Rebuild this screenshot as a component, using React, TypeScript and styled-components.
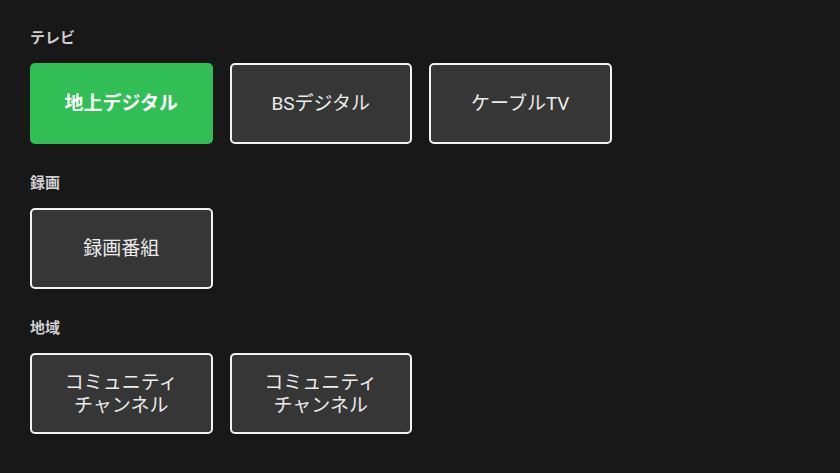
import React from "react";
import styled, { createGlobalStyle } from "styled-components";

const Global = createGlobalStyle`
  html, body {
    margin: 0;
    padding: 0;
    background: #181818;
  }
  body {
    font-family: Roboto, "Noto Sans CJK JP", sans-serif;
  }
`;

const Page = styled.div`
  width: 840px;
  height: 473px;
  box-sizing: border-box;
  padding: 28px 30px 0 30px;
  background: #181818;
  display: flex;
  flex-direction: column;
  gap: 29px;
`;

const Section = styled.section`
  display: flex;
  flex-direction: column;
  gap: 15px;
`;

const Label = styled.div`
  font-family: Roboto, "Noto Sans CJK JP", sans-serif;
  font-size: 15px;
  line-height: 20px;
  font-weight: 700;
  color: #cfcfcf;
`;

const Row = styled.div`
  display: flex;
  gap: 17px;
`;

const Tile = styled.button<{ $active?: boolean }>`
  width: 182.5px;
  height: 81px;
  box-sizing: border-box;
  margin: 0;
  padding: 0;
  border-radius: 5px;
  border: ${(p) => (p.$active ? "2px solid #30be55" : "2px solid #f2f2f2")};
  background: ${(p) => (p.$active ? "#30be55" : "#363636")};
  color: ${(p) => (p.$active ? "#ffffff" : "#ececec")};
  font-family: Roboto, "Noto Sans CJK JP", sans-serif;
  font-size: 19px;
  font-weight: ${(p) => (p.$active ? 700 : 400)};
  line-height: 23px;
  display: flex;
  align-items: center;
  justify-content: center;
  text-align: center;
  white-space: pre-line;
`;

const sections: { label: string; items: { text: string; active?: boolean }[] }[] = [
  {
    label: "テレビ",
    items: [
      { text: "地上デジタル", active: true },
      { text: "BSデジタル" },
      { text: "ケーブルTV" },
    ],
  },
  { label: "録画", items: [{ text: "録画番組" }] },
  {
    label: "地域",
    items: [
      { text: "コミュニティ\nチャンネル" },
      { text: "コミュニティ\nチャンネル" },
    ],
  },
];

export default function App() {
  return (
    <>
      <Global />
      <Page>
        {sections.map((s) => (
          <Section key={s.label}>
            <Label>{s.label}</Label>
            <Row>
              {s.items.map((it, i) => (
                <Tile key={i} $active={it.active}>
                  {it.text}
                </Tile>
              ))}
            </Row>
          </Section>
        ))}
      </Page>
    </>
  );
}
